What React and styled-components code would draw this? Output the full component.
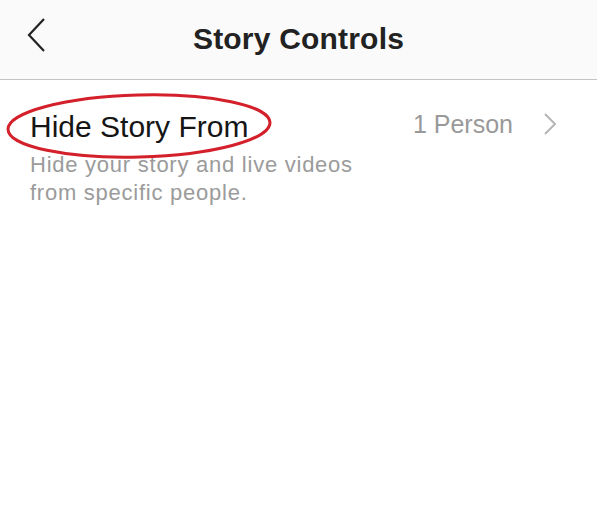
import styled, { createGlobalStyle } from "styled-components";

const GlobalStyle = createGlobalStyle`
  body {
    margin: 0;
    background: #ffffff;
    font-family: "Liberation Sans", Arial, sans-serif;
  }
`;

const Screen = styled.div`
  width: 597px;
  height: 521px;
  background: #ffffff;
`;

const Header = styled.header`
  height: 79px;
  background: #fafafa;
  border-bottom: 1px solid #c4c4c4;
  display: grid;
  grid-template-columns: 80px 1fr 80px;
  align-items: center;
`;

const BackButton = styled.button`
  border: none;
  background: transparent;
  padding: 17px 0 0 26px;
  height: 100%;
  display: flex;
  align-items: flex-start;
  cursor: pointer;
`;

const Title = styled.h1`
  margin: 0 0 2px;
  text-align: center;
  font-size: 30px;
  font-weight: 700;
  letter-spacing: 0.2px;
  color: #222222;
`;

const Row = styled.div`
  position: relative;
  display: flex;
  justify-content: space-between;
  align-items: flex-start;
  padding: 23px 40px 0 30px;
`;

const Info = styled.div`
  display: flex;
  flex-direction: column;
`;

const RowTitle = styled.span`
  font-size: 30px;
  color: #151515;
  line-height: 48px;
`;

const RowText = styled.p`
  margin: 0;
  font-size: 22px;
  line-height: 28px;
  letter-spacing: 0.75px;
  color: #9b9b9b;
  width: 355px;
`;

const Value = styled.div`
  display: flex;
  align-items: center;
  gap: 30px;
  height: 42px;
  font-size: 25px;
  color: #999999;
`;

const Circle = styled.svg`
  position: absolute;
  left: 4px;
  top: 12px;
  pointer-events: none;
`;

const ChevronLeft = () => (
  <svg width="20" height="36" viewBox="0 0 20 36">
    <path d="M18 2 L3 18 L18 34" fill="none" stroke="#222" strokeWidth="2.2" />
  </svg>
);

const ChevronRight = () => (
  <svg width="14" height="22" viewBox="0 0 14 22">
    <path d="M2 1 L12 11 L2 21" fill="none" stroke="#b5b5b5" strokeWidth="2" />
  </svg>
);

const App = () => {
  return (
    <Screen>
      <GlobalStyle />
      <Header>
        <BackButton>
          <ChevronLeft />
        </BackButton>
        <Title>Story Controls</Title>
        <span />
      </Header>
      <Row>
        <Info>
          <RowTitle>Hide Story From</RowTitle>
          <RowText>Hide your story and live videos from specific people.</RowText>
        </Info>
        <Value>
          1 Person
          <ChevronRight />
        </Value>
        <Circle width="272" height="72" viewBox="0 0 272 72">
          <ellipse
            cx="135"
            cy="34"
            rx="131"
            ry="31"
            fill="none"
            stroke="#d3202a"
            strokeWidth="3"
            transform="rotate(-1.5 135 34)"
          />
        </Circle>
      </Row>
    </Screen>
  );
};

export default App;
